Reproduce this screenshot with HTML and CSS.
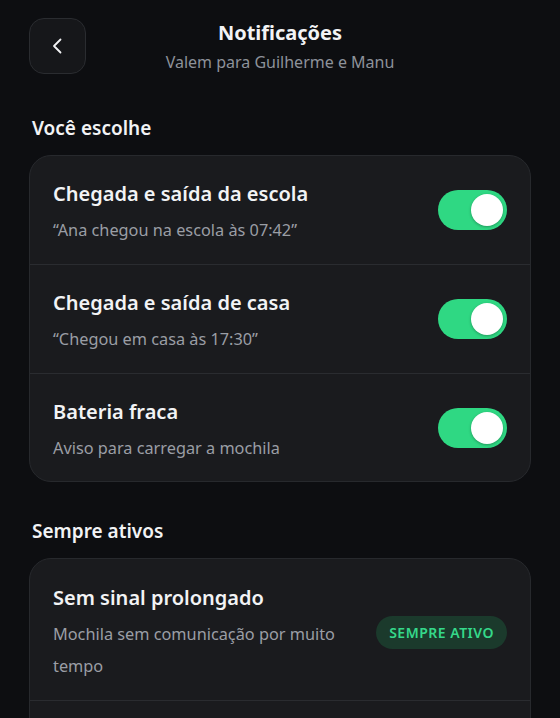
FILE: index.html
```html
<!DOCTYPE html>
<html lang="pt-BR">
<head>
    <meta charset="UTF-8">
    <meta name="viewport" content="width=device-width, initial-scale=1.0">
    <title>Notificações</title>
    <link rel="stylesheet" href="styles.css">
</head>
<body>
    <div class="page">
        <header class="top">
            <button class="back" type="button" aria-label="Voltar">
                <svg width="20" height="20" viewBox="0 0 20 20" fill="none">
                    <path d="M12.5 3.5 L6 10 L12.5 16.5" stroke="#f2f3f5" stroke-width="1.8" stroke-linecap="round" stroke-linejoin="round"/>
                </svg>
            </button>
            <div class="top-text">
                <h1>Notificações</h1>
                <p>Valem para Guilherme e Manu</p>
            </div>
        </header>

        <section class="group">
            <h2>Você escolhe</h2>
            <div class="card">
                <div class="row">
                    <div class="row-text">
                        <div class="row-title">Chegada e saída da escola</div>
                        <div class="row-desc">“Ana chegou na escola às 07:42”</div>
                    </div>
                    <span class="toggle on"><span class="knob"></span></span>
                </div>
                <div class="row">
                    <div class="row-text">
                        <div class="row-title">Chegada e saída de casa</div>
                        <div class="row-desc">“Chegou em casa às 17:30”</div>
                    </div>
                    <span class="toggle on"><span class="knob"></span></span>
                </div>
                <div class="row">
                    <div class="row-text">
                        <div class="row-title">Bateria fraca</div>
                        <div class="row-desc">Aviso para carregar a mochila</div>
                    </div>
                    <span class="toggle on"><span class="knob"></span></span>
                </div>
            </div>
        </section>

        <section class="group">
            <h2>Sempre ativos</h2>
            <div class="card">
                <div class="row tall">
                    <div class="row-text narrow">
                        <div class="row-title">Sem sinal prolongado</div>
                        <div class="row-desc">Mochila sem comunicação por muito tempo</div>
                    </div>
                    <span class="badge">SEMPRE ATIVO</span>
                </div>
                <div class="row row-empty"></div>
            </div>
        </section>
    </div>
</body>
</html>
```

FILE: styles.css
```css
*{margin:0;padding:0;box-sizing:border-box;}
html,body{background:#0d0e11;}
body{font-family:"Noto Sans","Open Sans",sans-serif;color:#f2f3f5;overflow:hidden;height:718px;}
.page{padding:18px 29px 0 29px;}

.top{display:flex;align-items:center;height:56px;}
.back{width:57px;height:56px;border-radius:15px;background:#16171a;border:1px solid #2a2c30;display:flex;align-items:center;justify-content:center;cursor:pointer;}
.top-text{flex:1;text-align:center;margin-right:57px;}
.top-text h1{font-size:20px;font-weight:700;line-height:28px;}
.top-text p{font-size:16px;color:#8d929a;line-height:22px;margin-top:4px;}

.group{margin-top:35px;}
.group:first-of-type{margin-top:40px;}
.group h2{font-size:19px;font-weight:600;line-height:28px;padding-left:3px;margin-bottom:13px;}

.card{background:#1a1b1e;border:1px solid #27292d;border-radius:22px;overflow:hidden;}
.row{display:flex;align-items:center;justify-content:space-between;padding:23px 23px 18px 23px;border-top:1px solid #2a2c30;}
.row:first-child{border-top:0;padding-top:23px;}
.row:last-child{padding-bottom:17px;}
.row.tall{padding-top:24px;padding-bottom:18px;}
.row-empty{height:60px;}
.row-text{flex:1;min-width:0;}
.row-text.narrow{padding-right:28px;}
.row-title{font-size:20px;font-weight:600;line-height:30px;}
.row-desc{font-size:16.3px;color:#9a9ea5;line-height:32px;margin-top:5px;}

.toggle{width:69px;height:40px;border-radius:20px;background:#2fd883;flex:none;display:flex;align-items:center;justify-content:flex-end;padding-right:4px;margin-top:-5px;}
.knob{width:32px;height:32px;border-radius:50%;background:#fff;box-shadow:0 1px 3px rgba(0,0,0,0.3);}

.badge{flex:none;font-size:14px;font-weight:600;letter-spacing:0.5px;color:#35d88a;background:#1b3a2c;border-radius:17px;padding:0 13px;height:33px;line-height:33px;}
```
